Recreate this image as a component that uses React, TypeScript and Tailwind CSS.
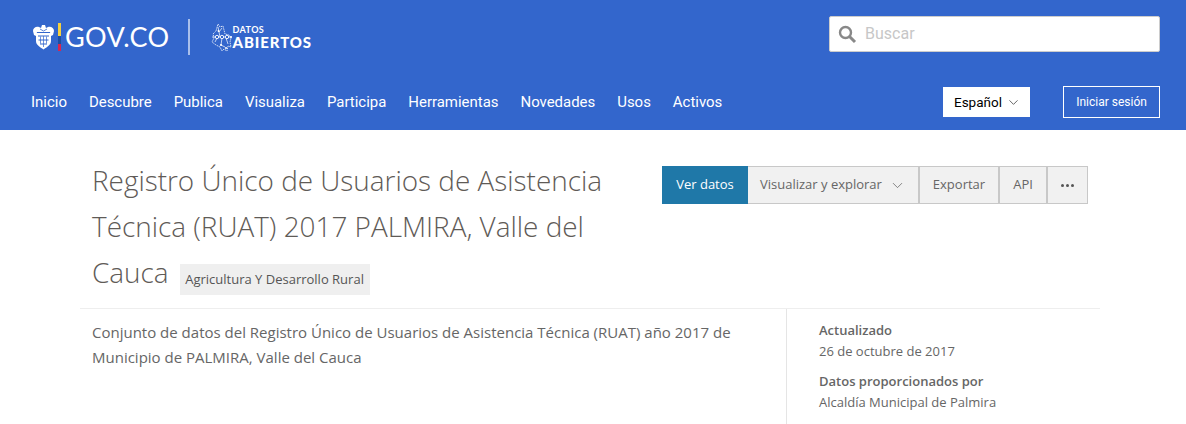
import React from 'react';
import { ChevronDown } from 'lucide-react';

const NAV = ['Inicio', 'Descubre', 'Publica', 'Visualiza', 'Participa', 'Herramientas', 'Novedades', 'Usos', 'Activos'];

const Shield = () => (
  <svg width="21" height="26" viewBox="0 0 21 26" fill="none" className="shrink-0">
    {/* condor wings and crest */}
    <path d="M0 7c0-3 3-5 6-4l2 1 1-3h3l1 3 2-1c3-1 6 1 6 4l-1 4-2 1-1-4H4l-1 4-2-1z" fill="#fff" />
    <path d="M3 9h15v8c0 4-4 6-7.500 8.500C7 23 3 21 3 17z" fill="#fff" />
    <path d="M5 12h11M5.500 16h10M7 20h7" stroke="#3366cc" strokeWidth="1" />
    <path d="M10.500 12v11M7.500 12.500v7M13.500 12.500v7" stroke="#3366cc" strokeWidth="0.700" />
    <path d="M7 5l3.500 2L14 5" stroke="#3366cc" strokeWidth="0.800" />
  </svg>
);

const ColombiaMap = () => (
  <svg width="22" height="29" viewBox="0 0 22 29" fill="none" className="shrink-0">
    <path d="M7 1l2 3 3-1 1 4 1 4 4 1 2 3-1 4 1 5-3-1-1 5-3-2-2 2-2-4-4-2-4-3 2-4-1-4 3-3z" stroke="#fff" strokeWidth="0.800" strokeDasharray="1.500 0.800" />
    <path d="M7 4l1 5 1 5M11 5l-3 4M1 14h20M11 15l-1 7M15 15l2 6M6 15l-2 4M10 22l4 2" stroke="#fff" strokeWidth="0.700" />
    <circle cx="6" cy="14" r="1.700" fill="#3366cc" stroke="#fff" strokeWidth="0.900" />
    <circle cx="11" cy="14" r="1.700" fill="#3366cc" stroke="#fff" strokeWidth="0.900" />
    <circle cx="16" cy="14" r="1.700" fill="#3366cc" stroke="#fff" strokeWidth="0.900" />
    <circle cx="20" cy="14" r="1" fill="#fff" />
    <circle cx="7.500" cy="8" r="0.900" fill="#fff" />
    <circle cx="10" cy="22" r="1.100" fill="#fff" />
    <circle cx="15" cy="25" r="1" fill="#fff" />
  </svg>
);

const App: React.FC = () => {
  return (
    <div className="w-[1186px] h-[424px] overflow-hidden bg-white font-['Open_Sans',sans-serif]">
      {/* Top bar */}
      <header className="h-[130px] bg-[#3366cc] px-[26px] flex flex-col">
        <div className="h-[86px] pt-[16px] flex items-start justify-between">
          <div className="flex items-center h-[36px] mt-[3px] ml-[7px]">
            <Shield />
            <div className="ml-[4px] w-[3px] h-[28px] flex flex-col">
              <div className="h-[13px] bg-[#f4d03f]" />
              <div className="h-[8px] bg-[#1d4fa0]" />
              <div className="h-[7px] bg-[#d9254f]" />
            </div>
            <span className="ml-[4px] mt-[-2px] text-white text-[27px] leading-none font-['Lato',sans-serif] tracking-[0.4px]">GOV.CO</span>
            <div className="ml-[18px] w-[2px] h-[36px] bg-[#a9bfeb]" />
            <div className="ml-[21px]">
              <ColombiaMap />
            </div>
            <div className="flex flex-col text-white font-['Lato',sans-serif] leading-none">
              <span className="text-[9px] font-bold tracking-[0.4px]">DATOS</span>
              <span className="text-[15px] font-black tracking-[0.900px] mt-[1px]">ABIERTOS</span>
            </div>
          </div>
          <div className="w-[331px] h-[36px] bg-white rounded-[2px] border border-[#ccc] flex items-center px-[8px]">
            <svg width="19" height="19" viewBox="0 0 19 19" fill="none" className="shrink-0">
              <circle cx="7.500" cy="7.500" r="5.500" stroke="#888" strokeWidth="2.400" />
              <path d="M11.500 11.500L17 17" stroke="#888" strokeWidth="3" />
            </svg>
            <span className="ml-[8px] text-[16px] text-[#c7c7c7] font-['Roboto',sans-serif]">Buscar</span>
          </div>
        </div>
        <div className="h-[32px] flex items-center justify-between pl-[5px]">
          <nav className="flex gap-[22px] text-white text-[14.950px] font-['Roboto',sans-serif]">
            {NAV.map((item) => (
              <span key={item}>{item}</span>
            ))}
          </nav>
          <div className="flex items-center">
            <div className="w-[87px] h-[30px] bg-white flex items-center justify-center pl-[2px] text-[13.500px] text-black font-['Roboto',sans-serif]">
              Español
              <ChevronDown size={15} strokeWidth={1.300} className="ml-[4px] text-[#444]" />
            </div>
            <div className="ml-[33px] w-[97px] h-[32px] border border-white flex items-center justify-center text-white text-[12px] font-['Roboto',sans-serif]">
              Iniciar sesión
            </div>
          </div>
        </div>
      </header>

      {/* Dataset title */}
      <div className="mx-[80px] w-[1020px]">
        <div className="flex justify-between h-[179px] border-b border-[#eee] px-[12px] pt-[27px]">
          <h1 className="w-[540px] text-[27.900px] leading-[46px] font-light text-[#5f5b57]">
            Registro Único de Usuarios de Asistencia Técnica (RUAT) 2017 PALMIRA, Valle del Cauca
            <span className="ml-[11px] inline-block h-[31px] w-[190px] text-center bg-[#efefef] text-[13px] leading-[31px] font-normal text-[#555] align-[-1px]">
              Agricultura Y Desarrollo Rural
            </span>
          </h1>
          <div className="flex h-[38px] mt-[9px] text-[13px] text-[#666]">
            <div className="w-[86px] bg-[#1f78a8] text-white font-medium flex items-center justify-center">Ver datos</div>
            <div className="w-[171px] bg-[#f1f1f1] border border-l-0 border-[#c8c8c8] flex items-center pl-[12px]">
              Visualizar y explorar
              <ChevronDown size={17} strokeWidth={1.100} className="ml-[7px]" />
            </div>
            <div className="w-[80px] bg-[#f1f1f1] border border-[#c8c8c8] flex items-center justify-center">Exportar</div>
            <div className="w-[48px] bg-[#f1f1f1] border border-[#c8c8c8] flex items-center justify-center">API</div>
            <div className="w-[41px] bg-[#f1f1f1] border border-[#c8c8c8] flex items-center justify-center gap-[2px]">
              <span className="w-[3px] h-[3px] rounded-full bg-[#555]" />
              <span className="w-[3px] h-[3px] rounded-full bg-[#555]" />
              <span className="w-[3px] h-[3px] rounded-full bg-[#555]" />
            </div>
          </div>
        </div>

        {/* Description and metadata */}
        <div className="flex">
          <p className="w-[706px] pl-[12px] pr-[20px] pt-[11px] text-[15px] leading-[25px] text-[#666]">
            Conjunto de datos del Registro Único de Usuarios de Asistencia Técnica (RUAT) año 2017 de Municipio de PALMIRA, Valle del Cauca
          </p>
          <div className="h-[116px] border-l border-[#e5e5e5] pl-[32px] pt-[11px] text-[13px] text-[#666]">
            <div className="font-semibold leading-[21px]">Actualizado</div>
            <div className="leading-[21px]">26 de octubre de 2017</div>
            <div className="font-semibold leading-[21px] mt-[9px]">Datos proporcionados por</div>
            <div className="leading-[21px]">Alcaldía Municipal de Palmira</div>
          </div>
        </div>
      </div>
    </div>
  );
};

export default App;
